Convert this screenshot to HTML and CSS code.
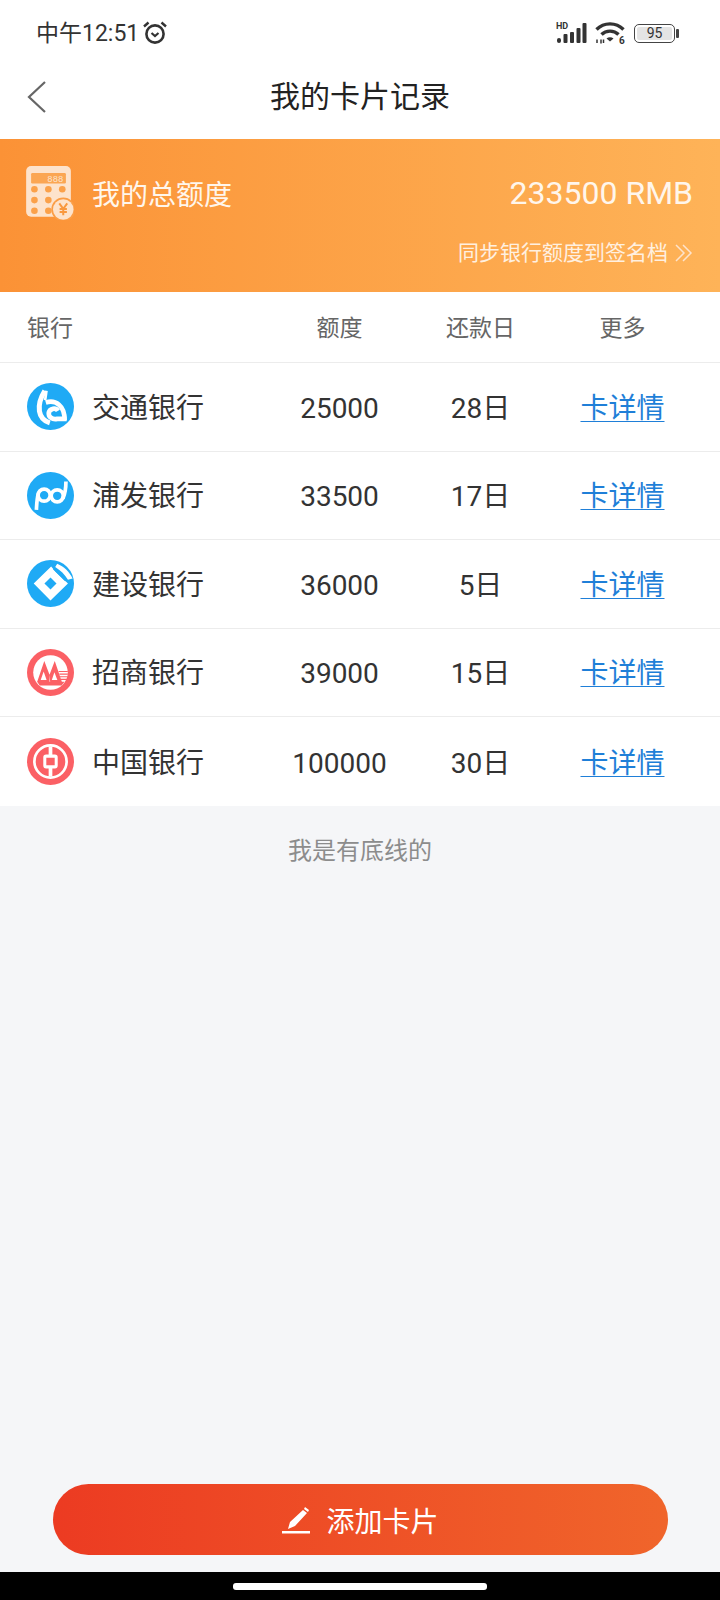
FILE: index.html
```html
<!DOCTYPE html>
<html>
    <head>
        <meta charset='utf-8'>
        <title>我的卡片记录</title>
        <link rel="stylesheet" href="styles.css">
    </head>
    <body>
        <div class='status-bar'>
            <div class='status-left'>
                <span class='status-time'>中午12:51</span>
                <svg class='alarm-icon' width='26' height='26' viewBox='0 0 26 26'>
                    <circle cx='13' cy='14' r='8.600' fill='none' stroke='#333' stroke-width='2.600'/>
                    <path d='M9.500 13l3.500 3 3.500-3' fill='none' stroke='#333' stroke-width='2.200'/>
                    <path d='M2 6.500L6.500 2.500M24 6.500L19.500 2.500' stroke='#333' stroke-width='2.400'/>
                </svg>
            </div>
            <div class='status-right'>
                <svg class='signal-icon' width='31' height='22' viewBox='0 0 31 22'>
                    <text x='0' y='7' class='hd-text'>HD</text>
                    <rect x='1' y='16' width='4' height='5' rx='2' fill='#333'/>
                    <rect x='7.500' y='12' width='4' height='9' rx='1' fill='#333'/>
                    <rect x='14' y='10' width='4' height='11' rx='1' fill='#333'/>
                    <rect x='20.500' y='6' width='4' height='15' rx='1' fill='#333'/>
                    <rect x='26.500' y='1' width='4' height='20' rx='1' fill='#333'/>
                </svg>
                <svg width='30' height='26' viewBox='0 0 30 26'>
                    <path d='M1.500 9.500C9 2 21 2 28.500 9.500' fill='none' stroke='#333' stroke-width='3.400'/>
                    <path d='M6.500 14.500C11 10 19 10 23.500 14.500' fill='none' stroke='#333' stroke-width='3.400'/>
                    <path d='M11.500 18.500C13.500 16.800 16.500 16.800 18.500 18.500L15 21.500Z' fill='#333'/>
                    <path d='M2 23v-3.500M6 19.500v4M8.500 23v-3.500' stroke='#333' stroke-width='1.500'/>
                    <text x='24' y='24' class='six-text'>6</text>
                </svg>
                <div class='battery'>
                    <div class='battery-body'>
                        <div class='battery-level'>95</div>
                    </div>
                    <div class='battery-cap'></div>
                </div>
            </div>
        </div>

        <div class='nav-bar'>
            <svg class='back-icon' width='20' height='32' viewBox='0 0 20 32'>
                <path d='M18 1L2 16L18 31' fill='none' stroke='#666' stroke-width='2.200'/>
            </svg>
            <div class='nav-title'>我的卡片记录</div>
        </div>

        <div class='total-banner'>
            <div class='total-top'>
                <svg class='calc-icon' width='48' height='54' viewBox='78 497 144 163'>
                    <rect x='78' y='497' width='135' height='153' rx='15' fill='#fde3cc'/>
                    <rect x='93' y='518' width='105' height='32' rx='4' fill='#fba653'/>
                    <text x='142' y='544' class='calc-digits'>888</text>
                    <g fill='#fba14a'>
                        <circle cx='103' cy='567' r='10'/>
                        <circle cx='145' cy='567' r='10'/>
                        <circle cx='187' cy='567' r='10'/>
                        <circle cx='103' cy='600' r='10'/>
                        <circle cx='145' cy='600' r='10'/>
                        <circle cx='103' cy='632' r='10'/>
                        <circle cx='145' cy='632' r='10'/>
                    </g>
                    <circle cx='190' cy='628' r='36' fill='#fb9d45'/>
                    <circle cx='190' cy='628' r='31' fill='#fde3cc'/>
                    <path d='M178 610L190 626L202 610M190 626V646M179 627H201M179 636H201' fill='none' stroke='#f9983e' stroke-width='6'/>
                </svg>
                <div class='total-label'>我的总额度</div>
                <div class='total-amount'>233500 RMB</div>
            </div>
            <div class='total-sync'>
                <span>同步银行额度到签名档</span>
                <svg width='18' height='18' viewBox='0 0 18 18'>
                    <path d='M1 1L9 9L1 17M8 1L16 9L8 17' fill='none' stroke='#fde3cc' stroke-width='1.500'/>
                </svg>
            </div>
        </div>

        <div class='card-table'>
            <div class='table-row table-head'>
                <div class='cell-bank'><span class='bank-name'>银行</span></div>
                <div class='cell'>额度</div>
                <div class='cell'>还款日</div>
                <div class='cell cell-more'>更多</div>
            </div>

            <div class='table-row'>
                <div class='cell-bank'>
                    <svg class='bank-icon' viewBox='50 41 140 140'>
                        <circle cx='120' cy='111' r='70' fill='#1faaf5'/>
                        <path d='M103 64C90 85 84 105 87 125C90 145 102 155 118 160' fill='none' stroke='#fff' stroke-width='15'/>
                        <path d='M104 92L108 64' fill='none' stroke='#fff' stroke-width='8'/>
                        <path d='M106 99C135 90 163 108 162 152' fill='none' stroke='#fff' stroke-width='14'/>
                        <path d='M142 124C136 114 118 116 115 129C113 142 125 151 140 148H168' fill='none' stroke='#fff' stroke-width='14'/>
                    </svg>
                    <span class='bank-name'>交通银行</span>
                </div>
                <div class='cell'>25000</div>
                <div class='cell'>28日</div>
                <div class='cell cell-more'><a class='detail-link'>卡详情</a></div>
            </div>

            <div class='table-row'>
                <div class='cell-bank'>
                    <svg class='bank-icon' viewBox='50 307 140 140'>
                        <circle cx='120' cy='377' r='70' fill='#1faaf5'/>
                        <circle cx='101' cy='376' r='18' fill='none' stroke='#fff' stroke-width='11'/>
                        <path d='M78 420C79 402 79 388 84 370' fill='none' stroke='#fff' stroke-width='11'/>
                        <circle cx='140' cy='378' r='18' fill='none' stroke='#fff' stroke-width='11'/>
                        <path d='M166 335C166 355 163 372 157 386' fill='none' stroke='#fff' stroke-width='11'/>
                    </svg>
                    <span class='bank-name'>浦发银行</span>
                </div>
                <div class='cell'>33500</div>
                <div class='cell'>17日</div>
                <div class='cell cell-more'><a class='detail-link'>卡详情</a></div>
            </div>

            <div class='table-row'>
                <div class='cell-bank'>
                    <svg class='bank-icon' viewBox='50 33 140 140'>
                        <circle cx='120' cy='103' r='70' fill='#1faaf5'/>
                        <path d='M122 52L70 103L120 154L172 103L160 92L135 68Z' fill='#fff'/>
                        <path d='M120 85L138 103L120 121L102 103Z' fill='#1faaf5'/>
                        <path d='M130 58L166 94' stroke='#1faaf5' stroke-width='7'/>
                        <path d='M140 44C160 52 176 68 186 88L172 92C162 76 150 64 134 54Z' fill='#fff'/>
                    </svg>
                    <span class='bank-name'>建设银行</span>
                </div>
                <div class='cell'>36000</div>
                <div class='cell'>5日</div>
                <div class='cell cell-more'><a class='detail-link'>卡详情</a></div>
            </div>

            <div class='table-row'>
                <div class='cell-bank'>
                    <svg class='bank-icon' viewBox='23 21 144 144'>
                        <circle cx='95' cy='93' r='72' fill='#fb6065'/>
                        <circle cx='95' cy='93' r='53' fill='#fff'/>
                        <path d='M76 58L54 122H94L92 100L108 58L130 122H92L92 100Z' fill='#fb6065'/>
                        <path d='M74 90L65 116H83Z' fill='#fff'/>
                        <path d='M107 92L99 116H116Z' fill='#fff'/>
                        <path d='M54 121H138L129 133H62Z' fill='#fb6065'/>
                        <path d='M120 90H148M122 98H148M124 106H148M126 114H146' stroke='#fb6065' stroke-width='3.500'/>
                    </svg>
                    <span class='bank-name'>招商银行</span>
                </div>
                <div class='cell'>39000</div>
                <div class='cell'>15日</div>
                <div class='cell cell-more'><a class='detail-link'>卡详情</a></div>
            </div>

            <div class='table-row'>
                <div class='cell-bank'>
                    <svg class='bank-icon' viewBox='81 113 140 140'>
                        <circle cx='151' cy='183' r='70' fill='#fb6065'/>
                        <circle cx='151' cy='183' r='48' fill='none' stroke='#fff' stroke-width='8'/>
                        <rect x='134' y='167' width='34' height='32' rx='4' fill='none' stroke='#fff' stroke-width='9'/>
                        <path d='M151 138V167M151 199V228' stroke='#fff' stroke-width='11'/>
                    </svg>
                    <span class='bank-name'>中国银行</span>
                </div>
                <div class='cell'>100000</div>
                <div class='cell'>30日</div>
                <div class='cell cell-more'><a class='detail-link'>卡详情</a></div>
            </div>
        </div>

        <div class='list-content'>
            <div class='list-end'>我是有底线的</div>
            <button class='add-btn'>
                <svg width='30' height='28' viewBox='0 0 30 28'>
                    <path d='M24 1L28 4L27 6L23 3ZM22 4L26 7L14 20L7 23L9 16Z' fill='#fff'/>
                    <rect x='1' y='25' width='28' height='2.500' fill='#fff'/>
                </svg>
                添加卡片
            </button>
        </div>

        <div class='home-bar'>
            <div class='home-pill'></div>
        </div>
    </body>
</html>
```

FILE: styles.css
```css
*{
    box-sizing: border-box;
}
body{
    display: flex;
    flex-direction: column;
    width: 720px;
    height: 1600px;
    margin: 0;
    overflow: hidden;
    background-color: #fff;
    font-family: Roboto, "Noto Sans CJK SC", sans-serif;
    color: #333;
}

.status-bar{
    display: flex;
    justify-content: space-between;
    align-items: center;
    height: 66px;
    padding: 0 41px 0 36px;
}
.status-left, .status-right{
    display: flex;
    align-items: center;
}
.status-time{
    padding-top: 1px;
    font-size: 23px;
    line-height: 30px;
    color: #333;
}
.alarm-icon{
    margin-left: 3px;
}
.status-right{
    gap: 9px;
}
.signal-icon{
    margin-right: -1px;
}
.hd-text{
    font-size: 9px;
    font-weight: 700;
    fill: #333;
}
.six-text{
    font-size: 10px;
    font-weight: 700;
    fill: #333;
}
.battery{
    display: flex;
    align-items: center;
}
.battery-body{
    width: 41px;
    height: 19px;
    padding: 2px;
    border: 1.5px solid #444;
    border-radius: 5px;
}
.battery-level{
    height: 100%;
    background-color: #e4e4e4;
    border-radius: 2px;
    font-size: 14px;
    line-height: 12px;
    text-align: center;
    color: #333;
}
.battery-cap{
    width: 3px;
    height: 9px;
    margin-left: 1px;
    background-color: #444;
    border-radius: 1px;
}

.nav-bar{
    position: relative;
    display: flex;
    justify-content: center;
    align-items: center;
    height: 73px;
    padding-bottom: 11px;
}
.back-icon{
    position: absolute;
    left: 27px;
    top: 15px;
}
.nav-title{
    font-size: 30px;
    line-height: 40px;
    color: #222;
}

.total-banner{
    height: 153px;
    padding: 27px 27px 0 26px;
    background: linear-gradient(90deg, #fb9236, #feb358);
    color: #fff;
}
.total-top{
    display: flex;
    align-items: center;
}
.calc-digits{
    font-size: 27px;
    fill: #fde3cc;
    font-family: "Liberation Mono", monospace;
}
.calc-icon{
    flex: none;
}
.total-label{
    margin-left: 18px;
    padding-top: 5px;
    font-size: 28px;
    line-height: 40px;
    color: #fff6ec;
}
.total-amount{
    margin-left: auto;
    font-size: 32px;
    line-height: 40px;
    color: #fff6ec;
}
.total-sync{
    display: flex;
    justify-content: flex-end;
    align-items: center;
    gap: 7px;
    margin-top: 18px;
    font-size: 21px;
    line-height: 30px;
    color: #fff0e0;
}

.card-table{
    background-color: #fff;
}
.table-row{
    display: grid;
    grid-template-columns: 1fr 141px 141px 141px;
    align-items: center;
    height: 88.5px;
    padding: 0 28px 0 27px;
    border-top: 1px solid #ececec;
    font-size: 28px;
    line-height: 40px;
}
.table-row:last-child{
    height: 90px;
}
.table-head{
    height: 70px;
    border-top: none;
    font-size: 23px;
    color: #666;
}
.cell{
    padding-top: 4px;
    text-align: center;
}
.cell-more{
    padding-left: 2px;
}
.cell-bank{
    display: flex;
    align-items: center;
}
.bank-name{
    padding-top: 4px;
}
.bank-icon{
    flex: none;
    width: 47px;
    height: 47px;
    margin-right: 18px;
}
.detail-link{
    color: #1f7fd8;
    text-decoration: underline;
    text-underline-offset: 3px;
    text-decoration-thickness: 1px;
}

.list-content{
    flex: 1;
    display: flex;
    flex-direction: column;
    justify-content: space-between;
    align-items: center;
    padding: 30px 0 17px;
    background-color: #f5f6f8;
}
.list-end{
    font-size: 24px;
    line-height: 30px;
    color: #8c8c8c;
}
.add-btn{
    display: flex;
    justify-content: center;
    align-items: center;
    gap: 15px;
    width: 615px;
    height: 71px;
    border: none;
    border-radius: 36px;
    background: linear-gradient(90deg, #ec3b22, #f0652b);
    font-family: inherit;
    font-size: 28px;
    color: #fff;
}

.home-bar{
    display: flex;
    justify-content: center;
    height: 28px;
    padding-top: 11px;
    background-color: #000;
}
.home-pill{
    width: 254px;
    height: 7px;
    background-color: #fff;
    border-radius: 3px;
}
```
